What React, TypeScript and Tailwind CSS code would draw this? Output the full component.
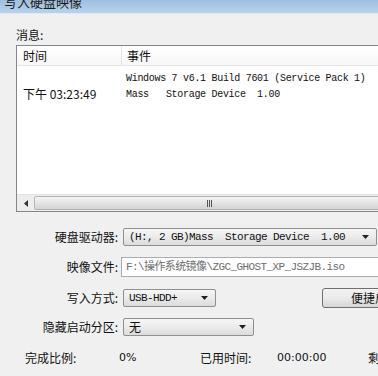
import React from "react";

const cjk = { fontFamily: '"Noto Sans CJK SC", "Liberation Sans", sans-serif' };
const mono = { fontFamily: '"Liberation Mono", "Noto Sans CJK SC", monospace' };

function Arrow() {
  return (
    <svg width="8" height="5" viewBox="0 0 8 5" className="shrink-0">
      <path d="M0 0 H7 L3.5 4 Z" fill="#222" />
    </svg>
  );
}

function Combo({ w, text, className = "" }: { w: string; text: React.ReactNode; className?: string }) {
  return (
    <div
      className={`${w} h-[18px] flex items-center justify-between pl-[5px] pr-[6px] rounded-[2px] border border-[#8e8f8f] bg-gradient-to-b from-[#f6f6f6] via-[#ebebeb] to-[#dcdcdc] ${className}`}
    >
      <span className="text-[11px] text-[#111] whitespace-pre tracking-[-0.6px] leading-none" style={mono}>
        {text}
      </span>
      <Arrow />
    </div>
  );
}

export default function App() {
  return (
    <div className="w-[378px] h-[376px] overflow-hidden bg-[#f0f0f0] relative" style={cjk}>
      {/* title bar */}
      <div className="h-[14px] bg-gradient-to-b from-[#9dbfe0] to-[#b9d2ea] border-b border-[#dde9f5] overflow-hidden relative">
        <div className="absolute left-[4px] top-[-6px] text-[13px] text-[#1a1a1a] leading-[16px]">写入硬盘映像</div>
      </div>
      <div className="flex">
        <div className="w-[3px] bg-[#c7daec] self-stretch" />
        <div className="flex-1 pl-[14px] pt-[14px]">
          <div className="text-[12px] text-[#111] leading-[14px] mb-[3px] ml-[2px]">消息:</div>
          {/* list box */}
          <div className="ml-[2px] w-[370px] h-[167px] border border-[#828790] bg-white flex flex-col">
            <div className="h-[20px] flex border-b border-[#e5e5e5] bg-gradient-to-b from-white to-[#f7f7f7]">
              <div className="w-[105px] border-r border-[#e5e5e5] pl-[6px] text-[12px] leading-[20px] text-[#111]">时间</div>
              <div className="flex-1 pl-[5px] text-[12px] leading-[20px] text-[#111]">事件</div>
            </div>
            <div className="flex-1 pt-[4px]">
              <div className="flex h-[16px] items-center">
                <div className="w-[109px]" />
                <div className="text-[10px] tracking-[-0.3px] text-[#111] whitespace-pre" style={mono}>
                  Windows 7 v6.1 Build 7601 (Service Pack 1)
                </div>
              </div>
              <div className="flex h-[16px] items-center">
                <div className="w-[109px] pl-[6px] text-[12px] text-[#111] whitespace-pre" style={{ fontFamily: '"Noto Sans CJK SC", "DejaVu Sans", sans-serif' }}>
                  下午 03:23:49
                </div>
                <div className="text-[10px] tracking-[-0.3px] text-[#111] whitespace-pre" style={mono}>
                  Mass   Storage Device  1.00
                </div>
              </div>
            </div>
            {/* scrollbar */}
            <div className="h-[17px] flex border-t border-[#e3e3e3] bg-[#ededed]">
              <div className="w-[17px] flex items-center justify-center">
                <svg width="4" height="7" viewBox="0 0 4 7">
                  <path d="M4 0 V7 L0 3.5 Z" fill="#333" />
                </svg>
              </div>
              <div className="flex-1 my-[1px] rounded-[2px] border border-[#b5b5b5] bg-gradient-to-b from-[#f3f3f3] via-[#e4e4e4] to-[#d3d3d3] flex items-center justify-center">
                <div className="flex gap-[1px]">
                  <div className="w-[1px] h-[7px] bg-[#555]" />
                  <div className="w-[1px] h-[7px] bg-[#555]" />
                  <div className="w-[1px] h-[7px] bg-[#555]" />
                </div>
              </div>
            </div>
          </div>

          {/* form */}
          <div className="mt-[16px] flex flex-col">
            <div className="flex items-center h-[18px]">
              <div className="w-[107px] text-right text-[12px] text-[#111] pr-[3px]">硬盘驱动器:</div>
              <Combo w="w-[254px]" text={"(H:, 2 GB)Mass  Storage Device  1.00"} className="ml-[2px]" />
            </div>
            <div className="flex items-center h-[20px] mt-[11px]">
              <div className="w-[107px] text-right text-[12px] text-[#111] pr-[3px]">映像文件:</div>
              <div className="w-[260px] h-[20px] border border-[#abadb3] bg-white flex items-center pl-[4px]">
                <span className="text-[11px] text-[#6d6d6d] whitespace-pre tracking-[-0.6px]" style={mono}>
                  F:\操作系统镜像\ZGC_GHOST_XP_JSZJB.iso
                </span>
              </div>
            </div>
            <div className="flex items-center h-[20px] mt-[11px]">
              <div className="w-[107px] text-right text-[12px] text-[#111] pr-[3px]">写入方式:</div>
              <Combo w="w-[93px]" text="USB-HDD+" className="ml-[2px]" />
              <div className="ml-[106px] w-[60px] h-[20px] rounded-[3px] border border-[#707070] bg-gradient-to-b from-[#f2f2f2] via-[#ebebeb] to-[#d6d6d6] flex items-center pl-[28px] text-[12px] text-[#111] whitespace-nowrap overflow-hidden">
                便捷启动
              </div>
            </div>
            <div className="flex items-center h-[18px] mt-[10px]">
              <div className="w-[107px] text-right text-[12px] text-[#111] pr-[3px]">隐藏启动分区:</div>
              <div className="ml-[2px] w-[131px] h-[18px] flex items-center justify-between pl-[5px] pr-[6px] rounded-[2px] border border-[#8e8f8f] bg-gradient-to-b from-[#f6f6f6] via-[#ebebeb] to-[#dcdcdc]">
                <span className="text-[12px] text-[#111]">无</span>
                <Arrow />
              </div>
            </div>
            <div className="flex items-center h-[16px] mt-[14px] text-[12px] text-[#111] whitespace-nowrap">
              <div className="w-[55px] ml-[11px]">完成比例:</div>
              <div className="ml-[39px] w-[81px] text-[11px]" style={{ fontFamily: '"DejaVu Sans", sans-serif' }}>0%</div>
              <div className="w-[77px]">已用时间:</div>
              <div className="w-[91px] text-[11px]" style={{ fontFamily: '"DejaVu Sans", sans-serif' }}>00:00:00</div>
              <div>剩余时间:</div>
            </div>
          </div>
        </div>
      </div>
    </div>
  );
}
